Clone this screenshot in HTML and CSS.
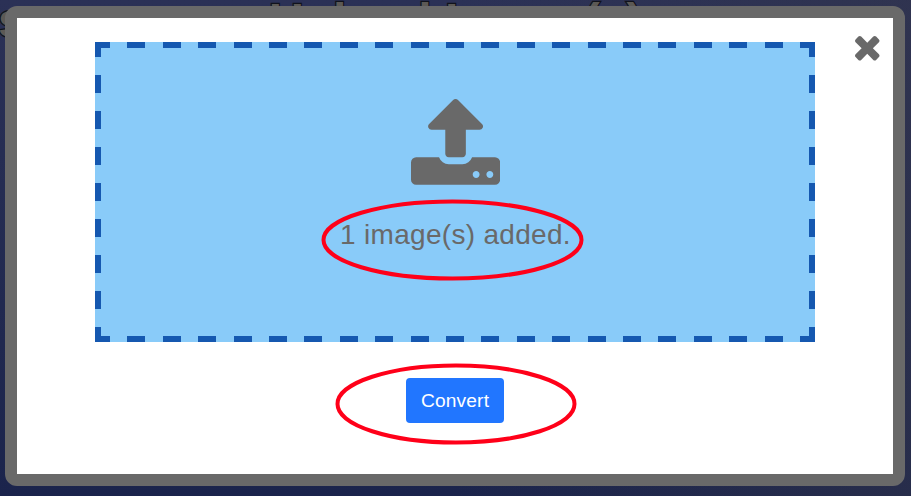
FILE: index.html
```html
<!DOCTYPE html>
<html lang="en">
<head>
<meta charset="utf-8">
<title>Upload Image(s)</title>
<link rel="stylesheet" href="styles.css">
</head>
<body>
<div class="backdrop" aria-hidden="true">
  <span class="heading">Upload Image(s)</span>
  <span class="heading edge">s</span>
</div>
<main class="modal">
  <section class="dropzone">
    <svg class="upload" viewBox="0 -65 1664 1601"><path d="M1280 1344q0-26-19-45t-45-19-45 19-19 45 19 45 45 19 45-19 19-45zm256 0q0-26-19-45t-45-19-45 19-19 45 19 45 45 19 45-19 19-45zm128-224v320q0 40-28 68t-68 28h-1472q-40 0-68-28t-28-68v-320q0-40 28-68t68-28h427q21 56 70.5 92t110.5 36h256q61 0 110.5-36t70.5-92h427q40 0 68 28t28 68zm-325-648q-17 39-59 39h-256v448q0 26-19 45t-45 19h-256q-26 0-45-19t-19-45v-448h-256q-42 0-59-39-17-40 14-70l448-448q18-19 45-19t45 19l448 448q31 30 14 70z"/></svg>
    <p class="status">1 image(s) added.</p>
  </section>
  <button class="convert" type="button">Convert</button>
  <button class="close" type="button" aria-label="Close"><svg viewBox="302 366 1188 1188"><path d="M1490 1322q0 40-28 68l-136 136q-28 28-68 28t-68-28l-294-294-294 294q-28 28-68 28t-68-28l-136-136q-28-28-28-68t28-68l294-294-294-294q-28-28-28-68t28-68l136-136q28-28 68-28t68 28l294 294 294-294q28-28 68-28t68 28l136 136q28 28 28 68t-28 68l-294 294 294 294q28 28 28 68z"/></svg></button>
</main>
<svg class="marks" viewBox="0 0 911 496" aria-hidden="true">
  <ellipse cx="452.5" cy="240" rx="129" ry="38.5"/>
  <ellipse cx="456" cy="404" rx="118.5" ry="38.5"/>
</svg>
</body>
</html>
```

FILE: styles.css
```css
* { box-sizing: border-box; }

body {
  margin: 0;
  height: 496px;
  padding: 6px 6px 10px 5px;
  overflow: hidden;
  position: relative;
  font-family: "Liberation Sans", Arial, sans-serif;
  background: linear-gradient(to right, transparent 50%, rgba(52, 54, 74, .5)), linear-gradient(#2b3156, #1b244c);
}

.heading {
  position: absolute;
  left: 269px;
  top: -7px;
  font-size: 48px;
  font-weight: 700;
  line-height: 55px;
  white-space: nowrap;
  color: #5c5955;
  -webkit-text-stroke: 2.4px #11131c;
  paint-order: stroke fill;
}

.edge { left: -2px; }

.modal {
  position: relative;
  width: 900px;
  height: 480px;
  padding-top: 24px;
  border: 12px solid #696969;
  border-radius: 12px;
  background: #fff;
  display: flex;
  flex-direction: column;
  align-items: center;
}

.dropzone {
  --dash-x: repeating-linear-gradient(to right, #1558b0 0 18px, transparent 18px 35.4px);
  --dash-y: repeating-linear-gradient(to bottom, #1558b0 0 18px, transparent 18px 36px);
  width: 720px;
  height: 300px;
  padding-top: 57px;
  background:
    var(--dash-x) -3px 0 / 726px 6px no-repeat,
    var(--dash-x) -3px 294px / 726px 6px no-repeat,
    var(--dash-y) 0 -3px / 6px 306px no-repeat,
    var(--dash-y) 714px -3px / 6px 306px no-repeat,
    #89cbf9;
  display: flex;
  flex-direction: column;
  align-items: center;
}

.upload {
  width: 89.14px;
  height: 85.8px;
  margin-left: 1.2px;
  fill: #696969;
}

.status {
  margin: 33px 0 0 1px;
  font-size: 28px;
  letter-spacing: .3px;
  line-height: 33px;
  color: #696969;
}

.convert {
  margin-top: 36px;
  width: 98px;
  height: 45px;
  padding: 0;
  border: 0;
  border-radius: 4px;
  background: #2176ff;
  color: #fff;
  font: 19.2px "Liberation Sans", Arial, sans-serif;
  letter-spacing: .15px;
}

.close {
  position: absolute;
  top: 18px;
  right: 13.5px;
  width: 24.5px;
  height: 24.5px;
  padding: 0;
  border: 0;
  background: none;
}

.close svg {
  display: block;
  width: 100%;
  height: 100%;
  fill: #696969;
}

.marks {
  position: absolute;
  inset: 0;
  width: 911px;
  height: 496px;
  fill: none;
  stroke: #ff0019;
  stroke-width: 4;
  pointer-events: none;
}
```
